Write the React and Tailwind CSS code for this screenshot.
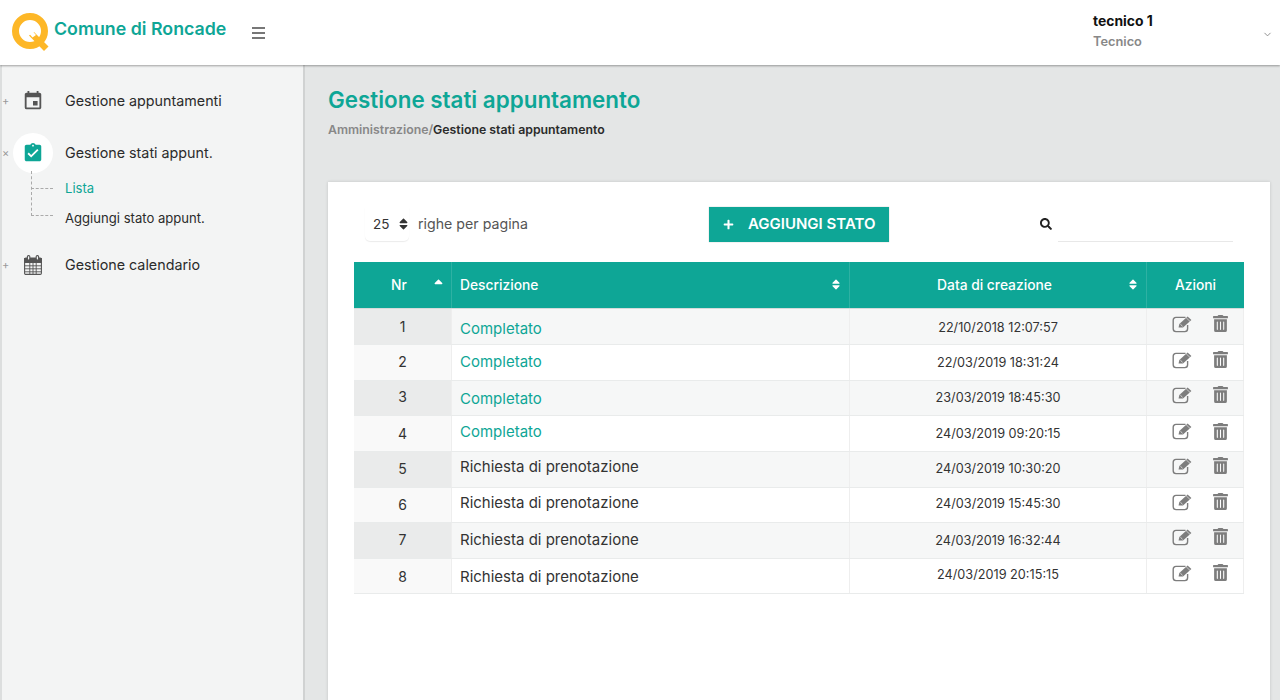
import React from "react";
import { MdEvent, MdAssignmentTurnedIn } from "react-icons/md";
import { FaTrashAlt, FaSearch, FaPlus, FaSort, FaSortUp } from "react-icons/fa";
import { LuChevronDown } from "react-icons/lu";

const font = { fontFamily: '"Inter", "Noto Sans", sans-serif' };

const rows = [
  { n: 1, d: "Completato", link: true, t: "22/10/2018 12:07:57", h: "h-[36px]", bg: "bg-[#f6f7f7]", nb: "bg-[#eaebeb]", no: "mt-[0px]", dd: "mt-[5px]", td: "mt-[2px]", ic: "-mt-[6px]" },
  { n: 2, d: "Completato", link: true, t: "22/03/2019 18:31:24", h: "h-[36px]", bg: "bg-white", nb: "bg-[#f9f9f9]", no: "-mt-[2px]", dd: "mt-[0px]", td: "mt-[0px]", ic: "-mt-[6px]" },
  { n: 3, d: "Completato", link: true, t: "23/03/2019 18:45:30", h: "h-[35px]", bg: "bg-[#f6f7f7]", nb: "bg-[#eaebeb]", no: "-mt-[4px]", dd: "mt-[2px]", td: "mt-[0px]", ic: "-mt-[7px]" },
  { n: 4, d: "Completato", link: true, t: "24/03/2019 09:20:15", h: "h-[36px]", bg: "bg-white", nb: "bg-[#f9f9f9]", no: "-mt-[1px]", dd: "-mt-[2px]", td: "mt-[1px]", ic: "-mt-[5px]" },
  { n: 5, d: "Richiesta di prenotazione", t: "24/03/2019 10:30:20", h: "h-[36px]", bg: "bg-[#f6f7f7]", nb: "bg-[#eaebeb]", no: "-mt-[2px]", dd: "-mt-[4px]", td: "-mt-[2px]", ic: "-mt-[8px]" },
  { n: 6, d: "Richiesta di prenotazione", t: "24/03/2019 15:45:30", h: "h-[35px]", bg: "bg-white", nb: "bg-[#f9f9f9]", no: "-mt-[1px]", dd: "-mt-[3px]", td: "-mt-[2px]", ic: "-mt-[7px]" },
  { n: 7, d: "Richiesta di prenotazione", t: "24/03/2019 16:32:44", h: "h-[36px]", bg: "bg-[#f6f7f7]", nb: "bg-[#eaebeb]", no: "-mt-[2px]", dd: "mt-[0px]", td: "mt-[0px]", ic: "-mt-[8px]" },
  { n: 8, d: "Richiesta di prenotazione", t: "24/03/2019 20:15:15", h: "h-[35px]", bg: "bg-white", nb: "bg-[#f9f9f9]", no: "mt-[0px]", dd: "mt-[3px]", td: "-mt-[2px]", ic: "-mt-[7px]" },
];

function Logo() {
  return (
    <svg width="38" height="38" viewBox="0 0 38 38" className="shrink-0">
      <circle cx="18" cy="18" r="14.5" fill="none" stroke="#fdb727" strokeWidth="7" />
      <path d="M17 22.5 L22 19 L36.5 33.5 L32 38 Z" fill="#fdb727" />
      <path d="M17 20.5 L20.5 18 L24 22 L20.5 24.5 Z" fill="#fff" />
    </svg>
  );
}

function GridCalendar() {
  return (
    <svg width="18" height="20" viewBox="0 0 18 20" fill="none" stroke="#555" strokeWidth="1.1">
      <rect x="0.6" y="3" width="16.8" height="16.4" rx="1.2" />
      <path d="M0.6 3.6h16.8V7.4H0.6z" fill="#555" />
      <path d="M5.8 7.4v12M9 7.4v12M12.2 7.4v12M0.6 10.8h16.8M0.6 13.8h16.8M0.6 16.8h16.8" strokeWidth="0.9" />
      <rect x="3.4" y="0.6" width="2.4" height="4.4" rx="1" fill="#f3f4f4" />
      <rect x="12.2" y="0.6" width="2.4" height="4.4" rx="1" fill="#f3f4f4" />
    </svg>
  );
}

function EditIcon({ className }) {
  return (
    <svg width="21" height="18" viewBox="0 0 21 18" className={className}>
      <path d="M13.5 2.4H4a2.8 2.8 0 0 0-2.8 2.8v8.6A2.8 2.8 0 0 0 4 16.6h8.8a2.8 2.8 0 0 0 2.8-2.8V10" fill="none" stroke="#7d7d7d" strokeWidth="1.4" />
      <path d="M6.6 12.6 L7.3 9 L15.6 1.4 L19.4 5 L11 12.6 Z" fill="#7d7d7d" />
      <path d="M8.4 9.2 L10.6 11.3" stroke="#fff" strokeWidth="0.7" />
      <path d="M14.2 2.8 L18 6.4" stroke="#fff" strokeWidth="0.6" />
    </svg>
  );
}

function NavItem({ sign, icon, label, active, className }) {
  return (
    <div className={`flex items-center ${className}`}>
      <span className="w-[11px] text-[11px] leading-none text-[#999]">{sign}</span>
      <span className="relative w-[40px] h-[40px] flex items-center justify-center">
        {active && <span className="absolute inset-0 rounded-full bg-white" />}
        <span className="relative">{icon}</span>
      </span>
      <span className="ml-[12px] text-[14.3px] text-[#2b2b2b]">{label}</span>
    </div>
  );
}

export default function App() {
  return (
    <div style={font} className="h-[700px] w-[1280px] overflow-hidden flex flex-col bg-[#e4e6e6]">
      <header className="relative z-10 h-[65px] shrink-0 bg-white shadow-[0_1px_2px_rgba(0,0,0,0.35)] flex items-center pl-[12px]">
        <span className="-mt-[2px]"><Logo /></span>
        <span className="ml-[4px] -mt-[7px] text-[17.8px] font-semibold text-[#0ea696]">Comune di Roncade</span>
        <span className="ml-[26px] flex flex-col gap-[3px] w-[13px]">
          <span className="h-[2px] bg-[#777]" />
          <span className="h-[2px] bg-[#777]" />
          <span className="h-[2px] bg-[#777]" />
        </span>
        <div className="ml-auto flex items-center">
          <div className="w-[169px] -mt-[2px]">
            <div className="text-[13.9px] font-bold leading-[20px] text-[#111]">tecnico 1</div>
            <div className="mt-[1px] text-[12.8px] font-semibold leading-[20px] text-[#888]">Tecnico</div>
          </div>
          <LuChevronDown className="w-[11px] h-[11px] text-[#888] mr-[7px] mt-[4px]" />
        </div>
      </header>

      <div className="flex flex-1 min-h-0">
        <aside className="w-[305px] shrink-0 bg-[#f3f4f4] border-r-[2px] border-[#d0d2d2] border-l-[2px] border-l-[#dcdede] pt-[16px]">
          <NavItem sign="+" label="Gestione appuntamenti" icon={<MdEvent className="w-[22px] h-[22px] text-[#555]" />} />
          <NavItem className="mt-[12px]" active sign="×" label="Gestione stati appunt." icon={<MdAssignmentTurnedIn className="w-[22px] h-[22px] text-[#0ea696]" />} />
          <div className="relative pl-[63px] text-[13.1px]">
            <span className="absolute left-[29px] top-[-2px] h-[45px] w-[22px] border-l border-b border-dashed border-[#aaa]" />
            <span className="absolute left-[29px] top-[15px] w-[22px] border-t border-dashed border-[#aaa]" />
            <div className="h-[30px] pt-[6px] text-[#0ea696]">Lista</div>
            <div className="h-[30px] pt-[6px] text-[#2b2b2b]">Aggiungi stato appunt.</div>
          </div>
          <NavItem className="mt-[12px]" sign="+" label="Gestione calendario" icon={<GridCalendar />} />
        </aside>

        <main className="flex-1 min-w-0 pl-[23px] pr-[10px] pt-[21px]">
          <h1 className="text-[22.4px] leading-[28px] font-semibold text-[#0ea696]">Gestione stati appuntamento</h1>
          <div className="mt-[8px] text-[12.3px] leading-[16px] font-semibold">
            <span className="text-[#888]">Amministrazione/</span><span className="text-[#2b2b2b]">Gestione stati appuntamento</span>
          </div>
          <section className="mt-[44px] h-[540px] bg-white shadow-[0_0_3px_rgba(0,0,0,0.15)] pl-[26px] pr-[26px] pt-[25px]">
            <div className="h-[55px] flex items-start">
              <div className="flex items-center w-[355px] pl-[11px] h-[34px]">
                <span className="w-[44px] h-[34px] rounded-b-[5px] shadow-[0_1px_1px_rgba(0,0,0,0.08)] flex items-center pl-[8px] gap-[10px] text-[13.5px] text-[#333]">
                  25
                  <FaSort className="w-[9px] h-[14px] text-[#333]" />
                </span>
                <span className="ml-[9px] text-[14.2px] text-[#555]">righe per pagina</span>
              </div>
              <button className="w-[180px] h-[35px] bg-[#0ea696] text-white flex items-center pl-[14px] text-[15px] font-semibold shadow-[0_0_1px_rgba(0,0,0,0.3)]">
                <FaPlus className="w-[11px] h-[11px] mr-[14px]" />
                AGGIUNGI STATO
              </button>
              <div className="ml-[151px] flex items-start">
                <FaSearch className="w-[12px] h-[12px] text-[#222] mt-[11px]" />
                <span className="ml-[6px] w-[175px] h-[35px] border-b border-[#e8e8e8]" />
              </div>
            </div>

            <div className="w-[890px]">
              <div className="h-[47px] flex bg-[#0ea696] text-white text-[13.8px] font-medium border-b border-[#d5dbda]">
                <div className="w-[98px] pt-[1px] flex items-center justify-center relative border-r border-[#2eb1a3]">
                  <span className="-ml-[7px]">Nr</span>
                  <FaSortUp className="absolute right-[8px] top-[16px] w-[9px] h-[14px] text-white" />
                </div>
                <div className="w-[398px] pt-[1px] flex items-center pl-[8px] relative border-r border-[#2eb1a3]">
                  Descrizione
                  <FaSort className="absolute right-[9px] top-[16px] w-[8px] h-[13px]" />
                </div>
                <div className="w-[297px] pt-[1px] pr-[7px] flex items-center justify-center relative border-r border-[#2eb1a3]">
                  Data di creazione
                  <FaSort className="absolute right-[9px] top-[16px] w-[8px] h-[13px]" />
                </div>
                <div className="w-[97px] pt-[1px] flex items-center justify-center">Azioni</div>
              </div>
              {rows.map((r) => (
                <div key={r.n} className={`${r.h} ${r.bg} flex border-b border-[#e9ebeb] text-[#333]`}>
                  <div className={`w-[98px] ${r.nb} flex items-center justify-center text-[14px] border-r border-[#eeeeee]`}><span className={r.no}>{r.n}</span></div>
                  <div className={`w-[398px] flex items-center pl-[8px] border-r border-[#eeeeee] text-[15px] ${r.link ? "text-[#0ea696]" : "text-[#333]"}`}><span className={r.dd}>{r.d}</span></div>
                  <div className="w-[297px] flex items-center justify-center border-r border-[#eeeeee] text-[12.7px]"><span className={r.td}>{r.t}</span></div>
                  <div className="w-[97px] flex items-center pl-[25px] gap-[20px] border-r border-[#eeeeee] text-[#7d7d7d]">
                    <EditIcon className={`shrink-0 ${r.ic}`} />
                    <FaTrashAlt className={`w-[15px] h-[17px] ${r.ic}`} />
                  </div>
                </div>
              ))}
            </div>
          </section>
        </main>
      </div>
    </div>
  );
}
